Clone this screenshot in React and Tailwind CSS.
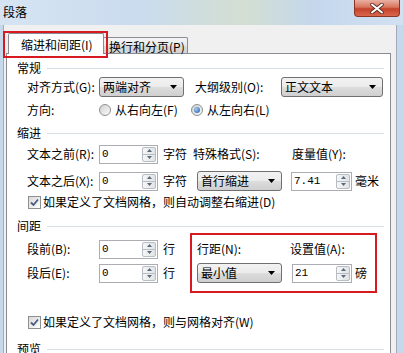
import React from "react";

function Arrow() {
  return (
    <svg width="7" height="4" viewBox="0 0 7 4">
      <polygon points="0,0 7,0 3.5,4" fill="#000" />
    </svg>
  );
}

function Select({ className, text }) {
  return (
    <div
      className={`flex items-center justify-between h-[20px] border border-[#707070] rounded-[3px] bg-[linear-gradient(180deg,#f2f2f2_0%,#ebebeb_50%,#dddddd_51%,#cfcfcf_100%)] pl-[3px] pr-[6px] ${className}`}
    >
      <span className="leading-[14px]">{text}</span>
      <Arrow />
    </div>
  );
}

function Spin({ className, value }) {
  return (
    <div className={`flex h-[19px] border border-[#abadb3] bg-white ${className}`}>
      <span className="flex-1 pl-[2px] font-['Liberation_Mono',monospace] text-[11px] leading-[17px]">
        {value}
      </span>
      <div className="w-[14px] flex flex-col my-[1px] mr-[1px] rounded-[2px] border border-[#b8bcc4] bg-[linear-gradient(90deg,#f6f6f6,#e1e3e6)] overflow-hidden">
        <div className="flex-1 flex items-center justify-center border-b border-[#b8bcc4]">
          <svg width="5" height="3" viewBox="0 0 5 3">
            <polygon points="0,3 5,3 2.5,0" fill="#5a6a80" />
          </svg>
        </div>
        <div className="flex-1 flex items-center justify-center">
          <svg width="5" height="3" viewBox="0 0 5 3">
            <polygon points="0,0 5,0 2.5,3" fill="#5a6a80" />
          </svg>
        </div>
      </div>
    </div>
  );
}

function Check() {
  return (
    <div className="w-[13px] h-[13px] border border-[#8e8f8f] bg-[linear-gradient(135deg,#d8d8d8,#ffffff)] flex items-center justify-center">
      <svg width="9" height="9" viewBox="0 0 9 9">
        <path d="M1 4.5 L3.5 7 L8 1.5" stroke="#4a5a80" strokeWidth="1.8" fill="none" />
      </svg>
    </div>
  );
}

function Radio({ checked }) {
  return (
    <div className="w-[12px] h-[12px] rounded-full border border-[#8e8f8f] bg-[linear-gradient(135deg,#d0d0d0,#fafafa)] flex items-center justify-center">
      {checked && (
        <div className="w-[6px] h-[6px] rounded-full bg-[radial-gradient(circle_at_35%_35%,#a6ccf2,#1a55a8)]" />
      )}
    </div>
  );
}

function Header({ text, className }) {
  return (
    <div className={`flex items-center h-[14px] pl-[10px] pr-[6px] ${className}`}>
      <span className="leading-[14px]">{text}</span>
      <div className="flex-1 h-px bg-[#d5dfe5] ml-[6px]" />
    </div>
  );
}

export default function App() {
  return (
    <div className="w-[403px] h-[353px] overflow-hidden flex flex-col bg-[#c6d8eb] text-[12px] text-black font-['Noto_Sans_CJK_SC',sans-serif]">
      {/* title bar */}
      <div className="h-[25px] shrink-0 flex justify-between items-start bg-[linear-gradient(90deg,#d6e4f2_0%,#cadbee_35%,#d3dfd2_60%,#c4d7ec_78%,#d2e1f1_100%)]">
        <span className="pl-[3px] pt-[5px] leading-[14px]">段落</span>
        <div className="mr-[3px] w-[46px] h-[17px] rounded-b-[4px] border border-t-0 border-[#8a3526] bg-[linear-gradient(180deg,#eab1a4_0%,#d8745c_45%,#c4412a_55%,#d9674c_100%)] flex items-center justify-center">
          <svg width="14" height="11" viewBox="0 0 14 11">
            <path d="M2 1.5 L12 9.5 M12 1.5 L2 9.5" stroke="#5a2a20" strokeWidth="3.6" strokeLinecap="round" />
            <path d="M2 1.5 L12 9.5 M12 1.5 L2 9.5" stroke="#ffffff" strokeWidth="2" strokeLinecap="round" />
          </svg>
        </div>
      </div>

      {/* dialog body */}
      <div className="flex-1 flex flex-col ml-[3px] w-[394px] bg-[#f0f0f0] border-l border-r border-[#a3acb8]">
        {/* tabs */}
        <div className="relative h-[28px] shrink-0 flex items-end pl-[4px]">
          <div className="relative z-10 h-[21px] w-[96px] -mb-px border border-b-0 border-[#898c95] bg-white rounded-t-[2px] pl-[12px] pt-[2px]">
            <span className="leading-[14px]">缩进和间距(I)</span>
          </div>
          <div className="h-[16px] w-[85px] -ml-px border border-b-0 border-[#898c95] rounded-t-[2px] bg-[linear-gradient(180deg,#f4f4f4_0%,#e9e9e9_50%,#dadada_51%,#d4d4d4_100%)] pl-[5px]">
            <span className="leading-[14px]">换行和分页(P)</span>
          </div>
          <div className="absolute left-[-1px] top-[6px] w-[105px] h-[27px] border-2 border-[#d71920] z-20" />
        </div>

        {/* panel */}
        <div className="ml-[2px] w-[385px] flex-1 bg-white border border-[#898c95]">
          <Header text="常规" className="mt-[7px]" />

          <div className="flex items-center h-[20px] pl-[20px] mt-[2px]">
            <span className="w-[72px]">对齐方式(G):</span>
            <Select className="w-[85px]" text="两端对齐" />
            <span className="ml-[11px] w-[86px]">大纲级别(O):</span>
            <Select className="w-[102px]" text="正文文本" />
          </div>

          <div className="flex items-center h-[18px] pl-[20px] mt-[4px]">
            <span className="w-[72px]">方向:</span>
            <div className="w-[92px] flex items-center">
              <Radio />
              <span className="ml-[4px]">从右向左(F)</span>
            </div>
            <div className="flex items-center">
              <Radio checked />
              <span className="ml-[4px]">从左向右(L)</span>
            </div>
          </div>

          <Header text="缩进" className="mt-[7px]" />

          <div className="flex items-center h-[20px] pl-[20px] mt-[4px]">
            <span className="w-[72px]">文本之前(R):</span>
            <Spin className="w-[59px]" value="0" />
            <span className="ml-[5px] w-[30px]">字符</span>
            <span className="w-[99px]">特殊格式(S):</span>
            <span>度量值(Y):</span>
          </div>

          <div className="flex items-center h-[20px] pl-[20px] mt-[7px]">
            <span className="w-[72px]">文本之后(X):</span>
            <Spin className="w-[59px]" value="0" />
            <span className="ml-[5px] w-[34px]">字符</span>
            <Select className="w-[85px]" text="首行缩进" />
            <Spin className="ml-[9px] w-[61px]" value="7.41" />
            <span className="ml-[3px]">毫米</span>
          </div>

          <div className="flex items-center h-[14px] pl-[21px] mt-[4px]">
            <Check />
            <span className="ml-[2px] leading-[14px]">如果定义了文档网格，则自动调整右缩进(D)</span>
          </div>

          <Header text="间距" className="mt-[10px]" />

          <div className="flex h-[60px] pl-[20px]">
            <div className="w-[163px] flex flex-col pt-[6px] gap-[4px]">
              <div className="flex items-center h-[20px]">
                <span className="w-[72px]">段前(B):</span>
                <Spin className="w-[59px]" value="0" />
                <span className="ml-[5px]">行</span>
              </div>
              <div className="flex items-center h-[20px]">
                <span className="w-[72px]">段后(E):</span>
                <Spin className="w-[59px]" value="0" />
                <span className="ml-[5px]">行</span>
              </div>
            </div>
            <div className="w-[187px] h-[60px] border-2 border-[#d71920] pt-[4px] pl-[5px] flex flex-col gap-[4px]">
              <div className="flex items-center h-[20px]">
                <span className="w-[93px]">行距(N):</span>
                <span>设置值(A):</span>
              </div>
              <div className="flex items-center h-[20px]">
                <Select className="w-[85px]" text="最小值" />
                <Spin className="ml-[10px] w-[60px]" value="21" />
                <span className="ml-[3px]">磅</span>
              </div>
            </div>
          </div>

          <div className="flex items-center h-[14px] pl-[21px] mt-[22px]">
            <Check />
            <span className="ml-[2px] leading-[14px]">如果定义了文档网格，则与网格对齐(W)</span>
          </div>

          <Header text="预览" className="mt-[13px]" />
        </div>
      </div>
    </div>
  );
}
